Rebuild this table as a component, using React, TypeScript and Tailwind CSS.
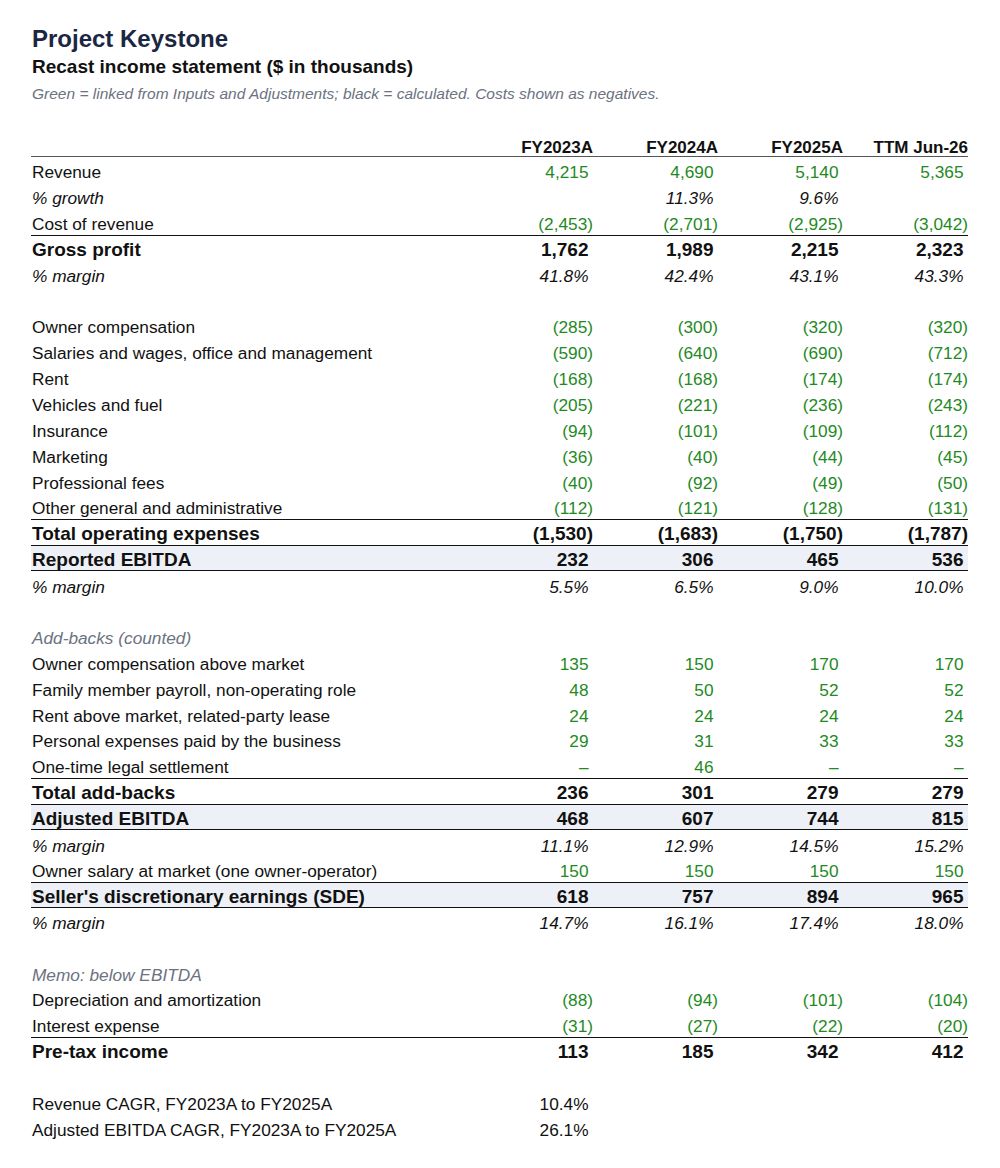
import React from "react";

type Kind = "normal" | "pct" | "total" | "band" | "section" | "blank" | "plain";
type Cell = { v: string; g?: boolean };
type Row = { kind: Kind; label?: string; cells?: (string | Cell)[] };

const G = (v: string): Cell => ({ v, g: true });

const rows: Row[] = [
  { kind: "normal", label: "Revenue", cells: [G("4,215"), G("4,690"), G("5,140"), G("5,365")] },
  { kind: "pct", label: "% growth", cells: ["", "11.3%", "9.6%", ""] },
  { kind: "normal", label: "Cost of revenue", cells: [G("(2,453)"), G("(2,701)"), G("(2,925)"), G("(3,042)")] },
  { kind: "total", label: "Gross profit", cells: ["1,762", "1,989", "2,215", "2,323"] },
  { kind: "pct", label: "% margin", cells: ["41.8%", "42.4%", "43.1%", "43.3%"] },
  { kind: "blank" },
  { kind: "normal", label: "Owner compensation", cells: [G("(285)"), G("(300)"), G("(320)"), G("(320)")] },
  { kind: "normal", label: "Salaries and wages, office and management", cells: [G("(590)"), G("(640)"), G("(690)"), G("(712)")] },
  { kind: "normal", label: "Rent", cells: [G("(168)"), G("(168)"), G("(174)"), G("(174)")] },
  { kind: "normal", label: "Vehicles and fuel", cells: [G("(205)"), G("(221)"), G("(236)"), G("(243)")] },
  { kind: "normal", label: "Insurance", cells: [G("(94)"), G("(101)"), G("(109)"), G("(112)")] },
  { kind: "normal", label: "Marketing", cells: [G("(36)"), G("(40)"), G("(44)"), G("(45)")] },
  { kind: "normal", label: "Professional fees", cells: [G("(40)"), G("(92)"), G("(49)"), G("(50)")] },
  { kind: "normal", label: "Other general and administrative", cells: [G("(112)"), G("(121)"), G("(128)"), G("(131)")] },
  { kind: "total", label: "Total operating expenses", cells: ["(1,530)", "(1,683)", "(1,750)", "(1,787)"] },
  { kind: "band", label: "Reported EBITDA", cells: ["232", "306", "465", "536"] },
  { kind: "pct", label: "% margin", cells: ["5.5%", "6.5%", "9.0%", "10.0%"] },
  { kind: "blank" },
  { kind: "section", label: "Add-backs (counted)" },
  { kind: "normal", label: "Owner compensation above market", cells: [G("135"), G("150"), G("170"), G("170")] },
  { kind: "normal", label: "Family member payroll, non-operating role", cells: [G("48"), G("50"), G("52"), G("52")] },
  { kind: "normal", label: "Rent above market, related-party lease", cells: [G("24"), G("24"), G("24"), G("24")] },
  { kind: "normal", label: "Personal expenses paid by the business", cells: [G("29"), G("31"), G("33"), G("33")] },
  { kind: "normal", label: "One-time legal settlement", cells: [G("–"), G("46"), G("–"), G("–")] },
  { kind: "total", label: "Total add-backs", cells: ["236", "301", "279", "279"] },
  { kind: "band", label: "Adjusted EBITDA", cells: ["468", "607", "744", "815"] },
  { kind: "pct", label: "% margin", cells: ["11.1%", "12.9%", "14.5%", "15.2%"] },
  { kind: "normal", label: "Owner salary at market (one owner-operator)", cells: [G("150"), G("150"), G("150"), G("150")] },
  { kind: "band", label: "Seller's discretionary earnings (SDE)", cells: ["618", "757", "894", "965"] },
  { kind: "pct", label: "% margin", cells: ["14.7%", "16.1%", "17.4%", "18.0%"] },
  { kind: "blank" },
  { kind: "section", label: "Memo: below EBITDA" },
  { kind: "normal", label: "Depreciation and amortization", cells: [G("(88)"), G("(94)"), G("(101)"), G("(104)")] },
  { kind: "normal", label: "Interest expense", cells: [G("(31)"), G("(27)"), G("(22)"), G("(20)")] },
  { kind: "total", label: "Pre-tax income", cells: ["113", "185", "342", "412"] },
  { kind: "blank" },
  { kind: "plain", label: "Revenue CAGR, FY2023A to FY2025A", cells: ["10.4%", "", "", ""] },
  { kind: "plain", label: "Adjusted EBITDA CAGR, FY2023A to FY2025A", cells: ["26.1%", "", "", ""] },
];

const grid = "grid grid-cols-[437px_125px_125px_125px_125px] items-center h-[25.9px]";

function Value({ c }: { c: string | Cell }) {
  const cell: Cell = typeof c === "string" ? { v: c } : c;
  const paren = cell.v.endsWith(")");
  return (
    <div
      className={
        "text-right whitespace-nowrap " +
        (paren ? "" : "pr-[4.5px] ") +
        (cell.g ? "text-[#1f8a1f]" : "text-[#111111]")
      }
    >
      {cell.v}
    </div>
  );
}

function TableRow({ r }: { r: Row }) {
  if (r.kind === "blank") return <div className="h-[25.9px]" />;
  if (r.kind === "section")
    return (
      <div className={grid + " pt-[3px] text-[17.25px] italic text-[#6b7280]"}>
        <div className="pl-[1px]">{r.label}</div>
      </div>
    );
  let cls = grid + " ";
  if (r.kind === "normal" || r.kind === "plain") cls += "pt-[3px] text-[17.25px] text-[#111111]";
  if (r.kind === "pct") cls += "pt-[3.5px] text-[17.25px] italic text-[#111111]";
  if (r.kind === "total") cls += "text-[19px] font-bold text-[#111111] border-t border-[#111111]";
  if (r.kind === "band")
    cls += "text-[19px] font-bold text-[#111111] border-t border-b border-[#111111] bg-[#edf0f6]";
  return (
    <div className={cls}>
      <div className="pl-[1px] whitespace-nowrap">{r.label}</div>
      {(r.cells || []).map((c, i) => (
        <Value key={i} c={c} />
      ))}
    </div>
  );
}

export default function App() {
  return (
    <div
      className="bg-white min-h-[1168px] px-[31px] pt-[24px]"
      style={{ fontFamily: '"Liberation Sans", Arial, sans-serif' }}
    >
      <h1 className="text-[24px] leading-[30px] font-bold text-[#1b2742] pl-[1px]">Project Keystone</h1>
      <h2 className="mt-[1px] text-[19px] leading-[24px] font-bold text-[#111111] pl-[1px]">
        Recast income statement ($ in thousands)
      </h2>
      <p className="mt-[5px] text-[15.5px] leading-[20px] italic text-[#6b7280] pl-[1px]">
        Green = linked from Inputs and Adjustments; black = calculated. Costs shown as negatives.
      </p>
      <div className="mt-[27px] w-[937px]">
        <div className={grid + " pt-[4px] text-[17px] font-bold text-[#111111] border-b border-[#555555]"}>
          <div />
          <div className="text-right">FY2023A</div>
          <div className="text-right">FY2024A</div>
          <div className="text-right">FY2025A</div>
          <div className="text-right">TTM Jun-26</div>
        </div>
        {rows.map((r, i) => (
          <TableRow key={i} r={r} />
        ))}
      </div>
    </div>
  );
}
